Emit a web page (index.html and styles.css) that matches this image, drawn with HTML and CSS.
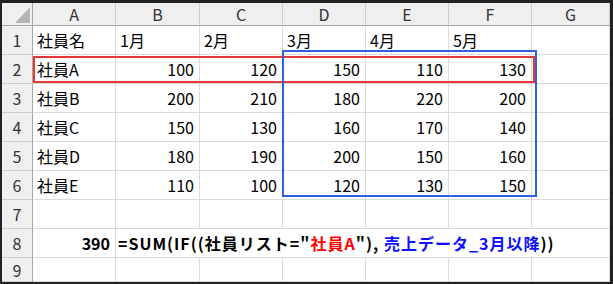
FILE: index.html
```html
<!DOCTYPE html>
<html lang="ja">
<head>
  <meta charset="UTF-8">
  <meta name="viewport" content="width=device-width, initial-scale=1.0">
  <title>売上集計</title>
  <link rel="stylesheet" href="styles.css">
</head>
<body>
  <div class="sheet">
    <div class="grid">
      <div class="hd corner">
        <svg width="30" height="22" viewBox="0 0 30 22"><polygon points="13,20 28,20 28,4" fill="#b5b5b5"/></svg>
      </div>
      <div class="hd col">A</div>
      <div class="hd col">B</div>
      <div class="hd col">C</div>
      <div class="hd col">D</div>
      <div class="hd col">E</div>
      <div class="hd col">F</div>
      <div class="hd col">G</div>

      <div class="hd row">1</div>
      <div class="cell">社員名</div>
      <div class="cell">1月</div>
      <div class="cell">2月</div>
      <div class="cell">3月</div>
      <div class="cell">4月</div>
      <div class="cell">5月</div>
      <div class="cell"></div>

      <div class="hd row">2</div>
      <div class="cell">社員A</div>
      <div class="cell num">100</div>
      <div class="cell num">120</div>
      <div class="cell num">150</div>
      <div class="cell num">110</div>
      <div class="cell num">130</div>
      <div class="cell"></div>

      <div class="hd row">3</div>
      <div class="cell">社員B</div>
      <div class="cell num">200</div>
      <div class="cell num">210</div>
      <div class="cell num">180</div>
      <div class="cell num">220</div>
      <div class="cell num">200</div>
      <div class="cell"></div>

      <div class="hd row">4</div>
      <div class="cell">社員C</div>
      <div class="cell num">150</div>
      <div class="cell num">130</div>
      <div class="cell num">160</div>
      <div class="cell num">170</div>
      <div class="cell num">140</div>
      <div class="cell"></div>

      <div class="hd row">5</div>
      <div class="cell">社員D</div>
      <div class="cell num">180</div>
      <div class="cell num">190</div>
      <div class="cell num">200</div>
      <div class="cell num">150</div>
      <div class="cell num">160</div>
      <div class="cell"></div>

      <div class="hd row">6</div>
      <div class="cell">社員E</div>
      <div class="cell num">110</div>
      <div class="cell num">100</div>
      <div class="cell num">120</div>
      <div class="cell num">130</div>
      <div class="cell num">150</div>
      <div class="cell"></div>

      <div class="hd row">7</div>
      <div class="cell"></div>
      <div class="cell"></div>
      <div class="cell"></div>
      <div class="cell"></div>
      <div class="cell"></div>
      <div class="cell"></div>
      <div class="cell"></div>

      <div class="hd row">8</div>
      <div class="cell num bold">390</div>
      <div class="cell formula">=SUM(IF((社員リスト="<span class="red">社員A</span>"),&nbsp;<span class="blue">売上データ_3月以降</span>))</div>

      <div class="hd row">9</div>
      <div class="cell"></div>
      <div class="cell"></div>
      <div class="cell"></div>
      <div class="cell"></div>
      <div class="cell"></div>
      <div class="cell"></div>
      <div class="cell"></div>
    </div>

    <!-- range highlights -->
    <div class="box box-red"></div>
    <div class="box box-blue"></div>
  </div>
</body>
</html>
```

FILE: styles.css
```css
body {
  margin: 0;
  padding: 0;
  background: #fff;
  font-family: "Noto Sans CJK JP", "Noto Sans", sans-serif;
}

.sheet {
  position: relative;
  width: 613px;
  height: 284px;
  box-sizing: border-box;
  border-style: solid;
  border-color: #222;
  border-width: 3px 3px 2px 2px;
  overflow: hidden;
}

.grid {
  display: grid;
  grid-template-columns: 31px 83px 84px 83px 83px 83px 83px 78px;
  grid-template-rows: 23px repeat(8, 29px) 24px;
}

.cell,
.hd {
  display: flex;
  align-items: center;
  box-sizing: border-box;
  font-size: 16px;
  white-space: nowrap;
}

.cell {
  padding: 0 4px;
  color: #000;
  border-right: 1px solid #dadada;
  border-bottom: 1px solid #dadada;
}

.num {
  justify-content: flex-end;
  padding-right: 5px;
}

.bold {
  font-weight: bold;
}

.hd {
  justify-content: center;
  background: #efefef;
  color: #333;
  border-right: 1px solid #cdcdcd;
  border-bottom: 1px solid #cdcdcd;
}

.hd.col {
  border-bottom-color: #a8a8a8;
}

.hd.row {
  border-right-color: #a8a8a8;
}

.hd.corner {
  border-right-color: #a8a8a8;
  border-bottom-color: #a8a8a8;
  align-items: flex-start;
  justify-content: flex-start;
}

.formula {
  grid-column: 3 / -1;
  padding-left: 2px;
  font-weight: bold;
  letter-spacing: 1px;
  overflow: visible;
}

.formula .red {
  color: #ff0000;
}

.formula .blue {
  color: #1010ff;
}

.box {
  position: absolute;
  box-sizing: border-box;
  border: 2px solid;
  pointer-events: none;
}

.box-red {
  left: 31px;
  top: 53px;
  width: 502px;
  height: 27px;
  border-color: #e5383b;
}

.box-blue {
  left: 280px;
  top: 47px;
  width: 255px;
  height: 147px;
  border-color: #2f62dc;
}
```
